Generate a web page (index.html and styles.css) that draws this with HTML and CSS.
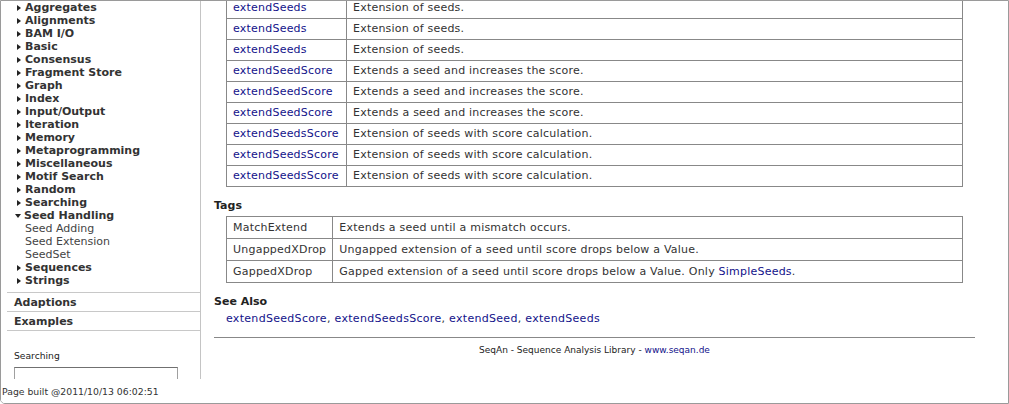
FILE: index.html
```html
<!DOCTYPE html>
<html>
<head>
<meta charset="utf-8">
<link rel="stylesheet" href="styles.css">
</head>
<body>
<div class="window">
  <div class="side-col">
    <div class="sidebar">
      <ul class="nav">
        <li><span class="tri"></span>Aggregates</li>
        <li><span class="tri"></span>Alignments</li>
        <li><span class="tri"></span>BAM I/O</li>
        <li><span class="tri"></span>Basic</li>
        <li><span class="tri"></span>Consensus</li>
        <li><span class="tri"></span>Fragment Store</li>
        <li><span class="tri"></span>Graph</li>
        <li><span class="tri"></span>Index</li>
        <li><span class="tri"></span>Input/Output</li>
        <li><span class="tri"></span>Iteration</li>
        <li><span class="tri"></span>Memory</li>
        <li><span class="tri"></span>Metaprogramming</li>
        <li><span class="tri"></span>Miscellaneous</li>
        <li><span class="tri"></span>Motif Search</li>
        <li><span class="tri"></span>Random</li>
        <li><span class="tri"></span>Searching</li>
        <li><span class="tri open"></span>Seed Handling</li>
        <li class="sub">Seed Adding</li>
        <li class="sub">Seed Extension</li>
        <li class="sub">SeedSet</li>
        <li><span class="tri"></span>Sequences</li>
        <li><span class="tri"></span>Strings</li>
      </ul>
      <div class="sect">Adaptions</div>
      <div class="sect">Examples</div>
      <div class="sect-end"></div>
      <div class="search-label">Searching</div>
      <div class="search-box"></div>
    </div>
  </div>
  <div class="main">
    <table class="tbl t1">
      <tr><td class="c1"><a href="#">extendSeeds</a></td><td>Extension of seeds.</td></tr>
      <tr><td class="c1"><a href="#">extendSeeds</a></td><td>Extension of seeds.</td></tr>
      <tr><td class="c1"><a href="#">extendSeeds</a></td><td>Extension of seeds.</td></tr>
      <tr><td class="c1"><a href="#">extendSeedScore</a></td><td>Extends a seed and increases the score.</td></tr>
      <tr><td class="c1"><a href="#">extendSeedScore</a></td><td>Extends a seed and increases the score.</td></tr>
      <tr><td class="c1"><a href="#">extendSeedScore</a></td><td>Extends a seed and increases the score.</td></tr>
      <tr><td class="c1"><a href="#">extendSeedsScore</a></td><td>Extension of seeds with score calculation.</td></tr>
      <tr><td class="c1"><a href="#">extendSeedsScore</a></td><td>Extension of seeds with score calculation.</td></tr>
      <tr><td class="c1"><a href="#">extendSeedsScore</a></td><td>Extension of seeds with score calculation.</td></tr>
    </table>
    <h3 class="h-tags">Tags</h3>
    <table class="tbl t2">
      <tr><td class="c1">MatchExtend</td><td>Extends a seed until a mismatch occurs.</td></tr>
      <tr><td class="c1">UngappedXDrop</td><td>Ungapped extension of a seed until score drops below a Value.</td></tr>
      <tr><td class="c1">GappedXDrop</td><td>Gapped extension of a seed until score drops below a Value. Only <a href="#">SimpleSeeds</a>.</td></tr>
    </table>
    <h3 class="h-see">See Also</h3>
    <div class="see-also"><a href="#">extendSeedScore</a>, <a href="#">extendSeedsScore</a>, <a href="#">extendSeed</a>, <a href="#">extendSeeds</a></div>
    <div class="footer">SeqAn - Sequence Analysis Library - <a href="#">www.seqan.de</a></div>
  </div>
  <div class="status">Page built @2011/10/13 06:02:51</div>
</div>
</body>
</html>
```

FILE: styles.css
```css
html, body {
  margin: 0;
  padding: 0;
  background: #ffffff;
}

.window {
  position: relative;
  width: 1009px;
  height: 404px;
  box-sizing: border-box;
  border: 1px solid #9a9a9a;
  border-bottom-left-radius: 5px;
  overflow: hidden;
  display: flex;
  font-family: "DejaVu Sans", Verdana, sans-serif;
  color: #333333;
}

a {
  color: #12128a;
  text-decoration: none;
}

.side-col {
  width: 200px;
  flex: none;
}

.sidebar {
  height: 378px;
  box-sizing: border-box;
  border-right: 1px solid #c4c4c4;
  overflow: hidden;
}

.nav {
  list-style: none;
  margin: 0;
  padding: 0;
}

.nav li {
  height: 13px;
  line-height: 13px;
  font-size: 11px;
  font-weight: bold;
  color: #333333;
  padding-left: 16px;
  display: flex;
  align-items: center;
  white-space: nowrap;
}

.nav li.sub {
  font-weight: normal;
  padding-left: 24px;
  color: #444444;
}

.tri {
  display: inline-block;
  width: 0;
  height: 0;
  border-left: 4px solid #222222;
  border-top: 3.5px solid transparent;
  border-bottom: 3.5px solid transparent;
  margin-right: 4px;
}

.tri.open {
  border-left: 3.5px solid transparent;
  border-right: 3.5px solid transparent;
  border-top: 4px solid #222222;
  border-bottom: 0;
  margin-left: -2px;
  margin-right: 3px;
}

.sect {
  margin: 5px 0 0 6px;
  border-top: 1px solid #c8c8c8;
  height: 18px;
  line-height: 19px;
  padding-left: 7px;
  font-size: 11px;
  font-weight: bold;
  color: #333333;
}

.sect + .sect {
  margin-top: 0;
}

.sect-end {
  margin-left: 6px;
  border-top: 1px solid #c8c8c8;
}

.search-label {
  margin: 19px 0 0 13px;
  font-size: 9.2px;
  line-height: 12px;
  color: #222222;
}

.search-box {
  margin: 5px 0 0 13px;
  width: 164px;
  height: 20px;
  box-sizing: border-box;
  border: 1px solid #a0a0a0;
  border-top-color: #707070;
}

.status {
  position: absolute;
  left: -1px;
  bottom: 0;
  width: 200px;
  height: 23px;
  background: #ffffff;
  font-size: 9.3px;
  line-height: 23px;
  padding-left: 2px;
  color: #333333;
  white-space: nowrap;
}

.main {
  flex: 1;
  margin-top: -4px;
  padding: 0 33px 0 13px;
  font-size: 11px;
}

.tbl {
  border-collapse: collapse;
  margin-left: 12px;
  width: 737px;
  border: 1px solid #888888;
  letter-spacing: 0.22px;
}

.tbl td {
  border: 1px solid #888888;
  padding: 3px 6px;
  line-height: 14px;
  height: 14px;
  white-space: nowrap;
}

.t1 td.c1 {
  width: 107px;
}

.t2 td {
  padding: 4px 6px 3px 6px;
}

.t2 td.c1 {
  width: 92px;
}

h3 {
  margin: 0;
  font-size: 11px;
  line-height: 14px;
  font-weight: bold;
  color: #222222;
}

.h-tags {
  margin-top: 12px;
  margin-bottom: 3px;
}

.h-see {
  margin-top: 12px;
}

.see-also {
  margin: 3px 0 0 12px;
  line-height: 14px;
  letter-spacing: 0.3px;
}

.footer {
  margin-top: 11px;
  border-top: 1px solid #888888;
  padding-top: 6px;
  text-align: center;
  font-size: 9px;
  line-height: 12px;
  color: #222222;
}
```
